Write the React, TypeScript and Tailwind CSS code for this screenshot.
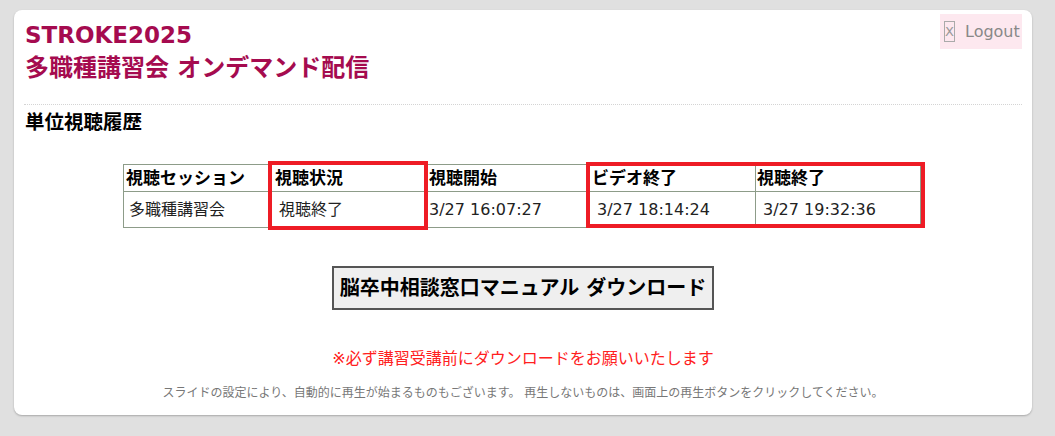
const FONT = "font-['DejaVu_Sans','Noto_Sans_CJK_JP',sans-serif]";

const COLS = [
  { head: "視聴セッション", body: "多職種講習会", w: "w-[147px]", hp: "pl-[2px]", bp: "pl-[5px]" },
  { head: "視聴状況", body: "視聴終了", w: "w-[155px]", hp: "pl-[4px]", bp: "pl-[8px]" },
  { head: "視聴開始", body: "3/27 16:07:27", w: "w-[162px]", hp: "pl-[3px]", bp: "pl-[3px]" },
  { head: "ビデオ終了", body: "3/27 18:14:24", w: "w-[168px]", hp: "pl-[4px]", bp: "pl-[9px]" },
  { head: "視聴終了", body: "3/27 19:32:36", w: "w-[165px]", hp: "pl-[1px]", bp: "pl-[7px]" },
];

function LogoutButton() {
  return (
    <button
      type="button"
      className="flex h-[35px] w-[82px] items-center gap-[10px] bg-[#fde8ef] pl-[4px] text-[16px] text-[#888]"
    >
      <span className="flex h-[21px] w-[11px] items-center justify-center border border-[#aaa] text-[13px] leading-none text-[#999]">
        X
      </span>
      Logout
    </button>
  );
}

function HistoryTable() {
  return (
    <div className="relative ml-[99px] w-[797px]">
      <table className="w-[797px] table-fixed border-collapse border border-[#8d9c89]">
        <colgroup>
          {COLS.map((c) => (
            <col key={c.head} className={c.w} />
          ))}
        </colgroup>
        <thead>
          <tr className="h-[27px]">
            {COLS.map((c) => (
              <th
                key={c.head}
                className={`border border-[#8d9c89] p-0 text-left text-[17px] font-bold leading-[22px] text-black ${c.hp}`}
              >
                {c.head}
              </th>
            ))}
          </tr>
        </thead>
        <tbody>
          <tr className="h-[36px]">
            {COLS.map((c) => (
              <td
                key={c.head}
                className={`border border-[#8d9c89] p-0 text-[16px] leading-[22px] text-[#222] ${c.bp}`}
              >
                {c.body}
              </td>
            ))}
          </tr>
        </tbody>
      </table>

      {/* red annotation boxes */}
      <div className="pointer-events-none absolute left-[145px] top-[-3px] h-[69px] w-[160px] border-[4px] border-[#ee1c25]" />
      <div className="pointer-events-none absolute left-[463px] top-[-2px] h-[66px] w-[339px] border-[4px] border-[#ee1c25]" />
    </div>
  );
}

export default function App() {
  return (
    <div className={`h-[436px] w-full overflow-hidden bg-[#e0e0e0] pl-[14px] pt-[10px] ${FONT}`}>
      <div className="w-[1018px] rounded-lg bg-white px-[10px] pb-[13px] pt-[4px] shadow-[0_1px_2px_rgba(0,0,0,0.25)]">
        {/* Header */}
        <div className="flex items-start justify-between">
          <h1 className="pl-px pt-[5px] font-bold text-[#a50b4f]">
            <div className="text-[23px] leading-[33px]">STROKE2025</div>
            <div className="text-[24px] leading-[33px]">多職種講習会 オンデマンド配信</div>
          </h1>
          <LogoutButton />
        </div>

        <div className="mt-[19px] border-t border-dotted border-[#d4d4d4]" />

        <h2 className="mt-[6px] pl-px text-[19.5px] font-bold leading-[24px] text-black">単位視聴履歴</h2>

        <div className="mt-[29px]">
          <HistoryTable />
        </div>

        <div className="mt-[38px] flex justify-center">
          <button
            type="button"
            className="h-[44px] w-[382px] border-2 border-[#555] bg-[#efefef] text-[20px] font-bold text-black"
          >
            脳卒中相談窓口マニュアル ダウンロード
          </button>
        </div>

        <p className="mt-[37px] text-center text-[16px] leading-[24px] text-[#ff2020]">
          ※必ず講習受講前にダウンロードをお願いいたします
        </p>
        <p className="mt-[13px] text-center text-[12px] leading-[18px] text-[#777]">
          スライドの設定により、自動的に再生が始まるものもございます。 再生しないものは、画面上の再生ボタンをクリックしてください。
        </p>
      </div>
    </div>
  );
}
